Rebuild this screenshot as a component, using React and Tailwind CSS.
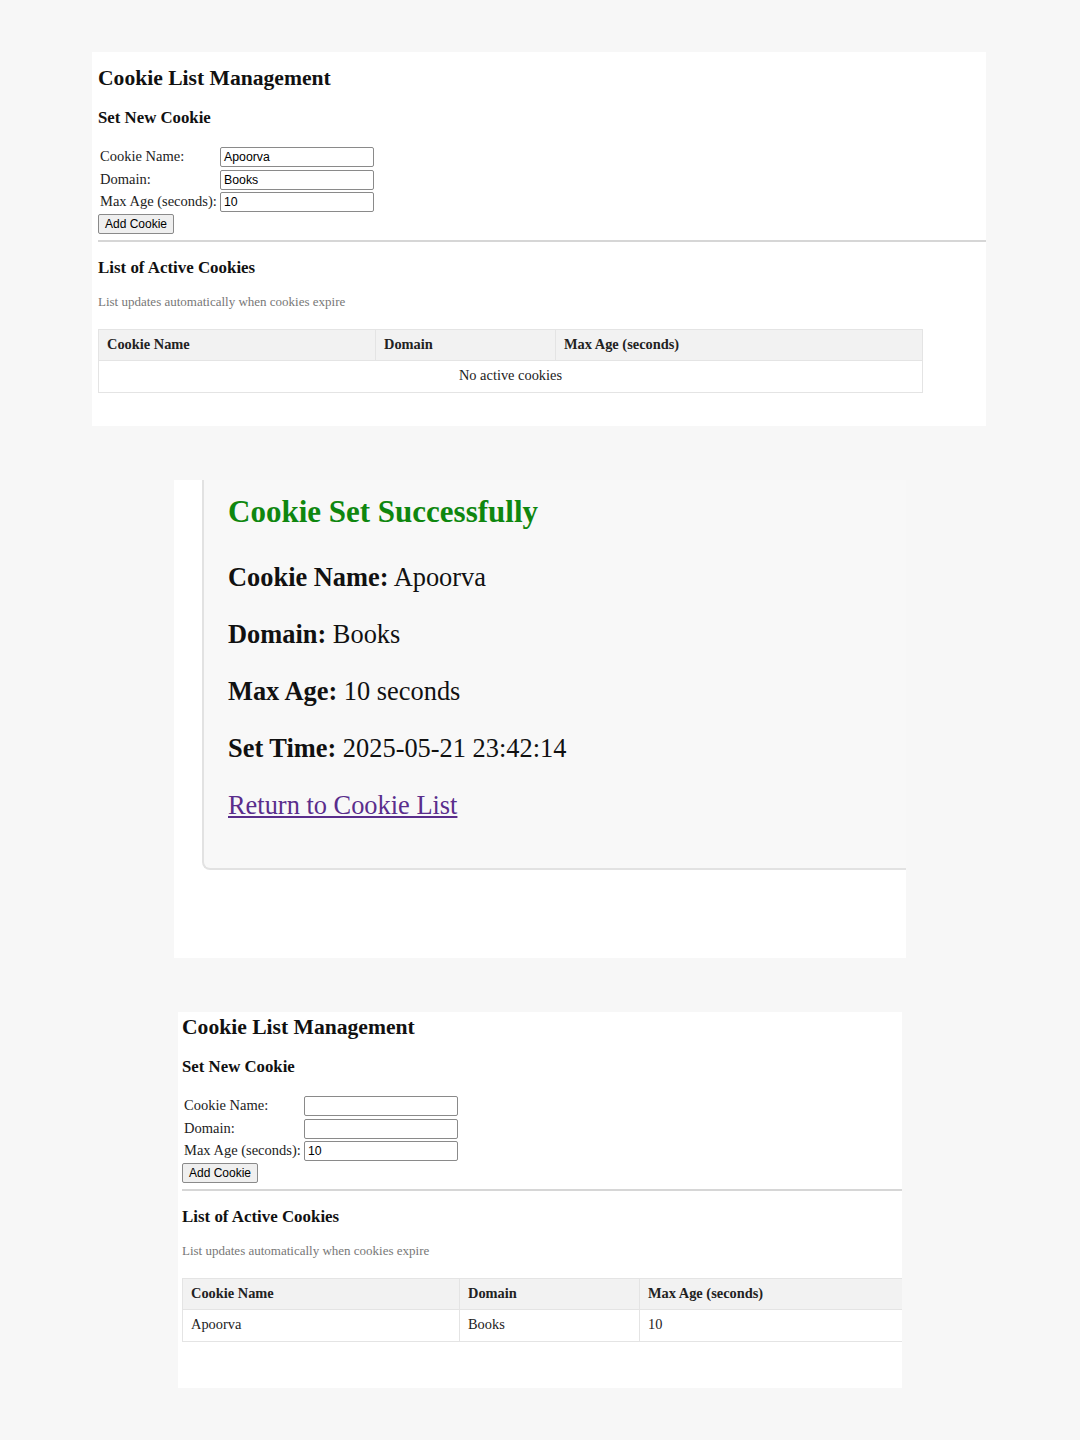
import React from "react";

const serif = { fontFamily: '"Liberation Serif", "Times New Roman", serif' };
const sans = { fontFamily: '"Liberation Sans", Arial, sans-serif' };

function FormRow({ label, value }) {
    return (
        <div className="flex items-center h-[22.5px]">
            <span className="w-[122px] pl-[2px] text-[14.5px] text-[#222] whitespace-nowrap">{label}</span>
            <div className="w-[154px] h-[20px] border border-[#8a8a8a] rounded-[2px] bg-white flex items-center px-[3px] text-[12.3px] text-black" style={sans}>
                {value}
            </div>
        </div>
    );
}

function CookiePanel({ className, inputs, rows, padLeft, padTop }) {
    return (
        <div className={"bg-white overflow-hidden " + className}>
            <div className="w-[894px]" style={{ ...serif, paddingTop: padTop, paddingLeft: padLeft }}>
                <h1 className="text-[21.6px] font-bold text-[#111] leading-[26px]">Cookie List Management</h1>
                <h2 className="mt-[17px] text-[16.8px] font-bold text-[#111] leading-[20px]">Set New Cookie</h2>

                {/* Form */}
                <div className="mt-[18px]">
                    <FormRow label="Cookie Name:" value={inputs[0]} />
                    <FormRow label="Domain:" value={inputs[1]} />
                    <FormRow label="Max Age (seconds):" value={inputs[2]} />
                    <button className="block h-[20px] w-[76px] border border-[#8a8a8a] rounded-[2px] bg-[#efefef] text-[12px] text-black leading-none" style={sans}>
                        Add Cookie
                    </button>
                </div>

                <hr className="mt-[6px] border-0 h-[2px] bg-[#d6d6d6]" />

                <h2 className="mt-[16px] text-[16.9px] font-bold text-[#111] leading-[20px]">List of Active Cookies</h2>
                <p className="mt-[16px] text-[13px] text-[#777] leading-[15px]">List updates automatically when cookies expire</p>

                {/* Table */}
                <table className="mt-[20px] w-[825px] border-collapse text-[14.4px] text-[#222]">
                    <thead>
                        <tr className="bg-[#f2f2f2] h-[31px] text-left">
                            <th className="w-[277px] border border-[#e4e4e4] px-[8px] font-bold">Cookie Name</th>
                            <th className="w-[180px] border border-[#e4e4e4] px-[8px] font-bold">Domain</th>
                            <th className="border border-[#e4e4e4] px-[8px] font-bold">Max Age (seconds)</th>
                        </tr>
                    </thead>
                    <tbody>
                        {rows.length === 0 ? (
                            <tr className="h-[32px]">
                                <td colSpan={3} className="border border-[#e4e4e4] text-center">No active cookies</td>
                            </tr>
                        ) : (
                            rows.map((r) => (
                                <tr key={r[0]} className="h-[32px]">
                                    <td className="border border-[#e4e4e4] px-[8px]">{r[0]}</td>
                                    <td className="border border-[#e4e4e4] px-[8px]">{r[1]}</td>
                                    <td className="border border-[#e4e4e4] px-[8px]">{r[2]}</td>
                                </tr>
                            ))
                        )}
                    </tbody>
                </table>
            </div>
        </div>
    );
}

function Detail({ label, value, first }) {
    return (
        <p className={"text-[26.4px] leading-[30px] text-[#111] " + (first ? "mt-[32px]" : "mt-[27px]")}>
            <b>{label}</b> {value}
        </p>
    );
}

export default function App() {
    return (
        <div className="min-h-[1440px] bg-[#f7f7f7] pt-[52px] pb-[52px] flex flex-col gap-[54px]">
            {/* First page: empty list */}
            <CookiePanel
                className="ml-[92px] w-[894px] h-[374px]"
                inputs={["Apoorva", "Books", "10"]}
                rows={[]}
                padLeft={6}
                padTop={13}
            />

            {/* Success page */}
            <div className="ml-[174px] w-[732px] h-[478px] bg-white overflow-hidden" style={serif}>
                <div className="ml-[28px] h-[390px] bg-[#f8f8f8] border-l-2 border-b-2 border-[#e2e2e2] rounded-bl-[8px] pl-[24px] pt-[14px]">
                    <h1 className="text-[31px] leading-[36px] font-bold text-[#0f870f]">Cookie Set Successfully</h1>
                    <Detail first label="Cookie Name:" value="Apoorva" />
                    <Detail label="Domain:" value="Books" />
                    <Detail label="Max Age:" value="10 seconds" />
                    <Detail label="Set Time:" value="2025-05-21 23:42:14" />
                    <p className="mt-[27px] text-[26.4px] leading-[30px]">
                        <a href="#" className="text-[#5a2d8c] underline">Return to Cookie List</a>
                    </p>
                </div>
            </div>

            {/* Second page: cookie listed */}
            <CookiePanel
                className="ml-[178px] w-[724px] h-[376px]"
                inputs={["", "", "10"]}
                rows={[["Apoorva", "Books", "10"]]}
                padLeft={4}
                padTop={2}
            />
        </div>
    );
}
